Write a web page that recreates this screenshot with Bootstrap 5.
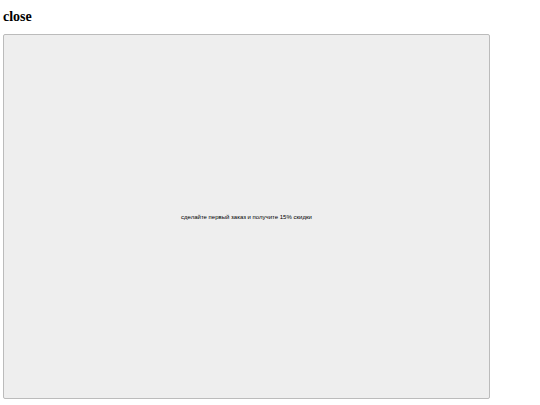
<!DOCTYPE html>
<html lang="ru">
<head>
<meta charset="utf-8">
<meta name="viewport" content="width=device-width, initial-scale=1">
<title>close</title>
<link rel="stylesheet" href="https://cdn.jsdelivr.net/npm/bootstrap@5.3.0/dist/css/bootstrap.min.css">
<style>
  .promo-page { padding: 9px 50px 6px 3px; color: #000; }
  .promo-title { font: bold 14px/16px "Liberation Serif", serif; margin-bottom: 9px; }
  .promo-button { border: 1px solid #bbb; border-radius: 2px; background: #eee; color: #000; font: 6px/8px "Liberation Sans", sans-serif; }
</style>
</head>
<body>
<main class="promo-page d-flex flex-column min-vh-100">
  <h2 class="promo-title">close</h2>
  <button type="button" class="promo-button flex-grow-1 w-100 p-0">сделайте первый заказ и получите 15% скидки</button>
</main>
<script src="https://cdn.jsdelivr.net/npm/bootstrap@5.3.0/dist/js/bootstrap.bundle.min.js"></script>
</body>
</html>
